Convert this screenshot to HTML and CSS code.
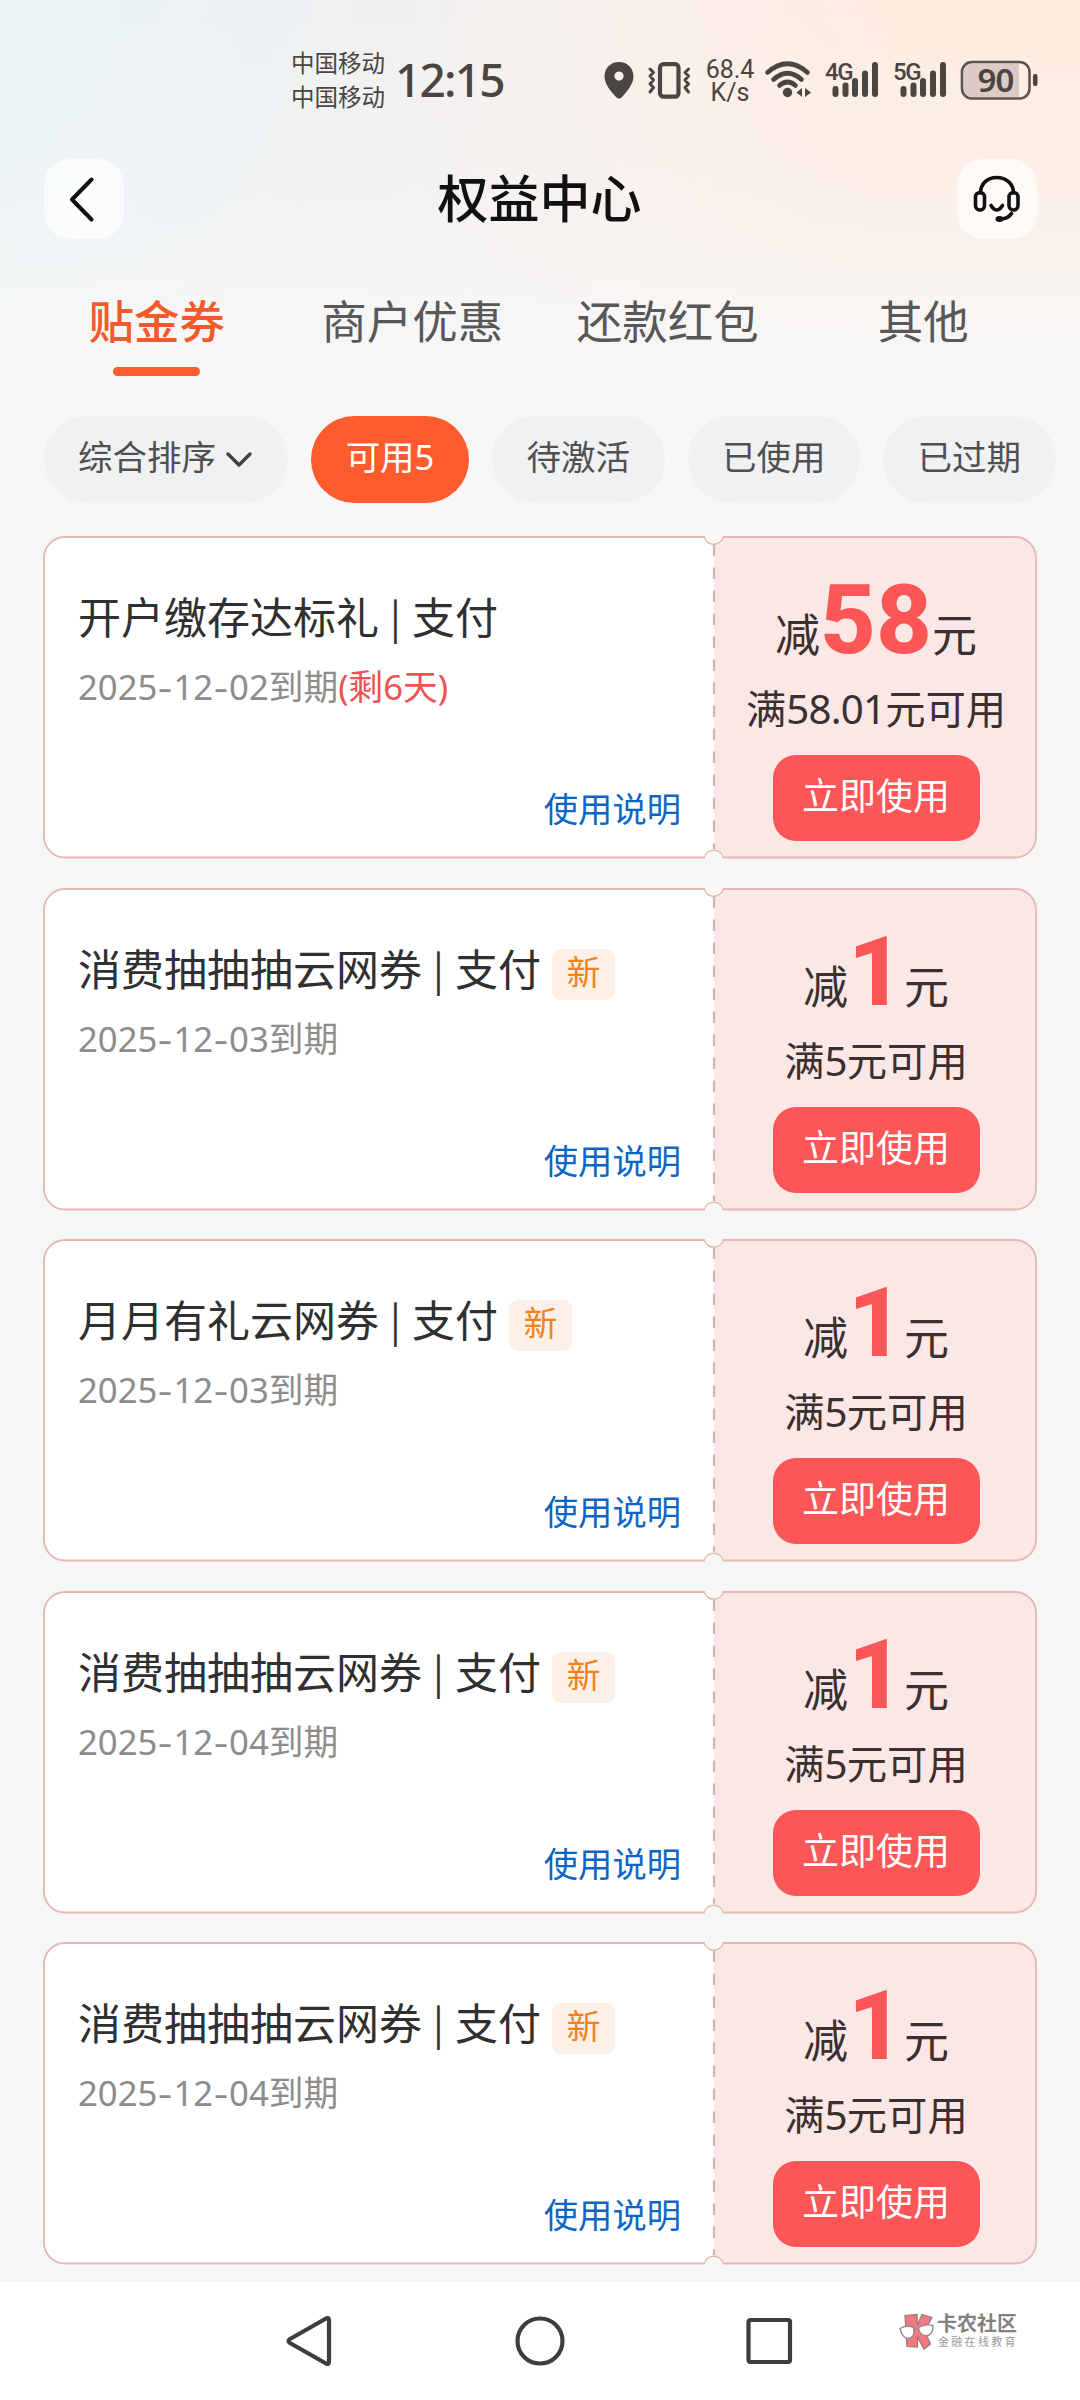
FILE: index.html
```html
<!DOCTYPE html>
<html lang="zh-CN">
<head>
<meta charset="utf-8">
<title>权益中心</title>
<link rel="stylesheet" href="styles.css">
</head>
<body>
<svg class="defs" width="0" height="0" aria-hidden="true">
  <symbol id="ticket" viewBox="0 0 994 323">
    <path class="ticket-left" d="M671 10V313.500a9.500 9.500 0 0 0-9 8H22A21 21 0 0 1 1 300.500V22A21 21 0 0 1 22 1H662a9.500 9.500 0 0 0 9 9Z"/>
    <path class="ticket-right" d="M671 10a9.500 9.500 0 0 0 9-9H972A21 21 0 0 1 993 22V300.500a21 21 0 0 1-21 21H680a9.500 9.500 0 0 0-9-8Z"/>
    <path class="ticket-line" d="M22 1H661.500a9.500 9.200 0 0 0 18.500 0H972A21 21 0 0 1 993 22V300.500a21 21 0 0 1-21 21H680a9.500 9.200 0 0 0-18.500 0H22A21 21 0 0 1 1 300.500V22A21 21 0 0 1 22 1Z"/>
    <path class="ticket-notch" d="M662 0V1a9 8.500 0 0 0 17.500 0V0ZM662 323V321.500a9 8.500 0 0 1 17.500 0V323Z"/>
    <path class="ticket-dash" d="M671 8.500V313"/>
  </symbol>
</svg>

<header class="header">
  <div class="status">
    <div class="carriers"><span>中国移动</span><span>中国移动</span></div>
    <div class="time">12:15</div>
    <div class="status-icons">
      <svg class="pin" width="30" height="37" viewBox="0 0 30 37"><path fill-rule="evenodd" d="M15 0C6.500 0 .5 6.300.5 14.500c0 7 5.500 14 11.500 20.500q3 3 6 0C24 28.500 29.500 21.500 29.500 14.500 29.500 6.300 23.500 0 15 0Zm0 9.500a4.500 4.500 0 1 1 0 9.200 4.500 4.500 0 0 1 0-9.200Z"/></svg>
      <svg class="vibrate" width="46" height="37" viewBox="0 0 46 37"><rect x="13" y="2.200" width="18.500" height="32.500" rx="3.500"/><path d="M3 7l3.500 3.500L3 14l3.500 4L3 22l3.500 3.500L3 30M41.500 7L38 10.500l3.500 3.500-3.500 4 3.500 4-3.500 3.500 3.500 4.500"/></svg>
      <div class="speed"><span>68.4</span><span>K/s</span></div>
      <svg class="wifi" width="48" height="38" viewBox="0 0 48 38"><g class="arcs"><path d="M3.500 11.500Q23.500-6 43.500 11.500M9.500 18.500Q23.500 6 37.500 18.500M15.500 24.500Q23.500 17.500 31.500 24.500"/></g><circle cx="23.500" cy="31.500" r="4.700"/><path d="M38 27v9l-5.500-4.500ZM41 27l6 4.500-6 4.500Z"/></svg>
      <svg class="signal" width="54" height="38" viewBox="0 0 54 38"><text x="0" y="18.500">4G</text><path d="M10.500 28V33M20.500 24.500V33M30 20V33M40 12.500V33M50 4V33"/></svg>
      <svg class="signal second" width="54" height="38" viewBox="0 0 54 38"><text x="0" y="18.500">5G</text><path d="M10.500 28V33M20.500 24.500V33M30 20V33M40 12.500V33M50 4V33"/></svg>
      <svg class="battery" width="78" height="40" viewBox="0 0 78 40"><path class="level" d="M12 3.500H59V37H12A8 8 0 0 1 4 29V11.500A8 8 0 0 1 12 3.500Z"/><rect class="case" x="2" y="2" width="67.500" height="36.500" rx="10"/><rect class="tip" x="73" y="14" width="4.500" height="12" rx="2"/><text x="35.500" y="32" text-anchor="middle">90</text></svg>
    </div>
  </div>

  <div class="titlebar">
    <button class="square-btn" aria-label="返回"><svg width="80" height="80" viewBox="0 0 80 80"><path d="M47.500 20.500L28 40.500 47.500 60.500"/></svg></button>
    <h1>权益中心</h1>
    <button class="square-btn" aria-label="客服"><svg width="80" height="80" viewBox="0 0 80 80"><g class="headset"><path d="M23.500 34C23.500 25 30 18.500 39.700 18.500S56.500 25 56.500 34"/><rect x="18.500" y="33.500" width="9" height="17.500" rx="4.500"/><rect x="52" y="33.500" width="9" height="17.500" rx="4.500"/><path d="M34 46.500q5.700 9 11.500 0M54.500 54.500Q51.500 59.500 44 60"/></g><ellipse cx="42.500" cy="60" rx="4" ry="3"/></svg></button>
  </div>

  <nav class="tabs">
    <a class="tab active">贴金券</a>
    <a class="tab">商户优惠</a>
    <a class="tab">还款红包</a>
    <a class="tab">其他</a>
  </nav>

  <div class="filters">
    <span class="chip sort">综合排序<svg width="26" height="16" viewBox="0 0 26 16"><path d="M2 2L13 13 24 2"/></svg></span>
    <span class="chip on">可用5</span>
    <span class="chip">待激活</span>
    <span class="chip">已使用</span>
    <span class="chip">已过期</span>
  </div>
</header>

<main class="list">
  <article class="card">
    <svg class="shape"><use href="#ticket"/></svg>
    <div class="info">
      <h2>开户缴存达标礼<i>|</i>支付</h2>
      <p class="date">2025<b>-</b>12<b>-</b>02到期<em>(剩6天)</em></p>
      <a class="help">使用说明</a>
    </div>
    <div class="offer">
      <div class="amount">减<strong>58</strong>元</div>
      <div class="cond">满<span>58.01</span>元可用</div>
      <button class="use">立即使用</button>
    </div>
  </article>
  <article class="card">
    <svg class="shape"><use href="#ticket"/></svg>
    <div class="info">
      <h2>消费抽抽抽云网券<i>|</i>支付<span class="new">新</span></h2>
      <p class="date">2025<b>-</b>12<b>-</b>03到期</p>
      <a class="help">使用说明</a>
    </div>
    <div class="offer">
      <div class="amount">减<strong>1</strong>元</div>
      <div class="cond">满<span>5</span>元可用</div>
      <button class="use">立即使用</button>
    </div>
  </article>
  <article class="card">
    <svg class="shape"><use href="#ticket"/></svg>
    <div class="info">
      <h2>月月有礼云网券<i>|</i>支付<span class="new">新</span></h2>
      <p class="date">2025<b>-</b>12<b>-</b>03到期</p>
      <a class="help">使用说明</a>
    </div>
    <div class="offer">
      <div class="amount">减<strong>1</strong>元</div>
      <div class="cond">满<span>5</span>元可用</div>
      <button class="use">立即使用</button>
    </div>
  </article>
  <article class="card">
    <svg class="shape"><use href="#ticket"/></svg>
    <div class="info">
      <h2>消费抽抽抽云网券<i>|</i>支付<span class="new">新</span></h2>
      <p class="date">2025<b>-</b>12<b>-</b>04到期</p>
      <a class="help">使用说明</a>
    </div>
    <div class="offer">
      <div class="amount">减<strong>1</strong>元</div>
      <div class="cond">满<span>5</span>元可用</div>
      <button class="use">立即使用</button>
    </div>
  </article>
  <article class="card">
    <svg class="shape"><use href="#ticket"/></svg>
    <div class="info">
      <h2>消费抽抽抽云网券<i>|</i>支付<span class="new">新</span></h2>
      <p class="date">2025<b>-</b>12<b>-</b>04到期</p>
      <a class="help">使用说明</a>
    </div>
    <div class="offer">
      <div class="amount">减<strong>1</strong>元</div>
      <div class="cond">满<span>5</span>元可用</div>
      <button class="use">立即使用</button>
    </div>
  </article>
</main>

<footer class="navbar">
  <svg class="key back" width="50" height="54" viewBox="0 0 50 54"><path d="M42 4.500L6 25Q3 27 6 29L42 49.500Q45 51 45 48V6Q45 3 42 4.500Z"/></svg>
  <svg class="key home" width="50" height="54" viewBox="0 0 50 54"><circle cx="25" cy="27" r="22.500"/></svg>
  <svg class="key recent" width="50" height="54" viewBox="0 0 50 54"><rect x="4.500" y="6" width="41.500" height="42" rx="2"/></svg>
  <div class="brand">
    <svg width="36" height="38" viewBox="0 0 36 38"><path class="k" d="M6 2.500L18 1.500 18.500 12 23 1.500 33 4.500 25.500 18 31.500 31 25 36 18.500 24V34L8 33.500Z"/><path class="g" d="M1 15.500Q8 11.500 14.500 14.500 16.500 24.500 9 25.500 3 25 1 15.500ZM19.500 14.500Q26 10.500 34 12.500 34.500 22 27 22.800 20.500 22.500 19.500 14.500ZM14.500 16L19.500 15.500"/></svg>
    <div class="brand-text"><strong>卡农社区</strong><small>金融在线教育</small></div>
  </div>
</footer>
</body>
</html>
```
FILE: styles.css
```css
* { box-sizing: border-box; margin: 0; padding: 0; }
body {
  width: 1080px;
  height: 2400px;
  display: flex;
  flex-direction: column;
  overflow: hidden;
  background: #f6f6f6;
  font-family: "Noto Sans", "Noto Sans CJK SC", sans-serif;
  color: #303030;
}
button { border: 0; font-family: inherit; }
svg { overflow: visible; }
.defs { position: absolute; }

/* header */
.header {
  height: 527px;
  flex: none;
  border-bottom: 2px solid #fafafa;
  background:
    linear-gradient(180deg, rgba(247,247,247,0) 0, rgba(247,247,247,.2) 130px, rgba(247,247,247,.45) 230px, rgba(247,247,247,.85) 320px, #f7f7f7 400px),
    linear-gradient(100deg, #e9f4f7 0, #edf1f4 22%, #f4f0ee 43%, #fbeee7 62%, #feecdf 78%, #feecdf 100%);
}
.status {
  height: 159px;
  display: flex;
  align-items: flex-start;
  padding-left: 291px;
  color: #4a4541;
}
.carriers { display: flex; flex-direction: column; padding-top: 46px; width: 104px; }
.carriers span { font-size: 23.500px; line-height: 34px; white-space: nowrap; }
.time { width: 208px; padding-top: 49px; font-size: 46px; line-height: 60px; font-weight: 500; letter-spacing: -1.800px; white-space: nowrap; }
.status-icons { display: flex; align-items: flex-start; padding-top: 61px; fill: #4a4541; }
.pin { margin-left: 1px; margin-top: 1px; }
.vibrate { margin-left: 13px; margin-top: 1px; fill: none; stroke: #4a4541; stroke-width: 4.200; stroke-linejoin: round; }
.vibrate path { stroke-width: 3; stroke-linecap: round; }
.speed { display: flex; flex-direction: column; align-items: center; width: 52px; margin: -3px 0 0 11px; font-family: Roboto, sans-serif; font-size: 25px; line-height: 23px; }
.wifi { margin-left: 8px; }
.wifi .arcs { fill: none; stroke: #4a4541; stroke-width: 4.600; stroke-linecap: round; }
.signal { margin-left: 13px; }
.signal.second { margin-left: 14px; }
.signal path { stroke: #4a4541; stroke-width: 6; stroke-linecap: round; }
.signal text { font: 500 24px Roboto, sans-serif; letter-spacing: -1.500px; }
.battery { margin-left: 13px; margin-top: -1px; }
.battery .level { fill: #dccbc4; }
.battery .case { fill: none; stroke: #5a534e; stroke-width: 2.600; }
.battery text { font: 600 33px "Noto Sans", sans-serif; letter-spacing: -1px; }

.titlebar { display: flex; justify-content: space-between; align-items: center; height: 80px; padding: 0 43px 0 44px; }
.square-btn { width: 80px; height: 80px; border-radius: 26px; background: rgba(255,255,255,.64); }
.square-btn svg { display: block; fill: #111; }
.square-btn path, .square-btn rect { fill: none; stroke: #111; stroke-width: 4; stroke-linecap: round; stroke-linejoin: round; }
.square-btn .headset path, .square-btn .headset rect { stroke-width: 3.600; }
h1 { padding: 0 2px 3px 0; font-size: 51px; line-height: 72px; font-weight: 500; color: #111; }

.tabs { display: flex; padding: 0 29px; height: 177px; }
.tab {
  flex: 1;
  display: flex;
  flex-direction: column;
  align-items: center;
  padding-top: 50px;
  font-size: 45.500px;
  line-height: 64px;
  color: #585858;
}
.tab.active { color: #f15b2c; font-weight: 500; }
.tab.active::after { content: ""; width: 87px; height: 9px; margin-top: 14px; border-radius: 5px; background: #fb5c2e; }

.filters { display: flex; gap: 23px; padding-left: 44px; }
.chip {
  width: 172.500px;
  height: 87px;
  flex: none;
  display: flex;
  justify-content: center;
  border-radius: 44px;
  background: #eff1f3;
  font-size: 34.500px;
  line-height: 82px;
  color: #505050;
}
.chip.sort { width: 244px; padding-right: 2px; }
.chip.sort svg { margin: 36px 0 0 10px; fill: none; stroke: #404040; stroke-width: 3.400; stroke-linecap: round; stroke-linejoin: round; }
.chip.on { width: 158px; background: #ff5c2e; color: #fff; }

/* coupons */
.list { flex: 1; display: flex; flex-direction: column; gap: 28.450px; padding: 9.200px 0 0 43px; }
.card { position: relative; width: 995px; height: 323px; flex: none; display: flex; }
.shape { position: absolute; inset: 0; width: 994px; height: 323px; }
.ticket-left { fill: #fff; }
.ticket-right { fill: #fbe7e5; }
.ticket-line { fill: none; stroke: #e6b7b2; stroke-width: 1.800; }
.ticket-notch { fill: #f9f8f8; }
.ticket-dash { fill: none; stroke: #dcaeae; stroke-width: 2.200; stroke-dasharray: 11.500 11.500; }
.info { position: relative; width: 671px; padding: 53px 33px 0 35px; display: flex; flex-direction: column; }
h2 { display: flex; height: 58px; font-size: 43px; line-height: 57px; font-weight: 400; color: #303030; white-space: nowrap; }
h2 i { width: 33px; text-align: center; font-style: normal; font-family: "Noto Sans CJK SC", sans-serif; font-size: 40px; line-height: 54px; }
.new { width: 63px; height: 51px; margin: 8px 0 0 11px; border-radius: 9px; background: #fdf0e7; color: #f0831e; font-size: 34px; line-height: 46px; text-align: center; }
.date { margin-top: 16px; font-size: 34.700px; line-height: 48px; color: #8c8c8c; white-space: nowrap; }
.date b { display: inline-block; width: 16px; text-align: center; font-weight: 400; transform: scaleX(1.3); }
.date em { font-style: normal; color: #ef5252; }
.help { margin-top: 74px; align-self: flex-end; font-size: 34.300px; line-height: 48px; color: #0b66c6; }
.offer { position: relative; width: 324px; display: flex; flex-direction: column; align-items: center; }
.amount { height: 140px; padding-top: 28px; display: flex; align-items: baseline; font-size: 45px; line-height: 110px; color: #3a302f; }
.amount strong { position: relative; top: 1px; font-family: Roboto, sans-serif; font-size: 97px; font-weight: 800; color: #fd5656; }
.cond { height: 56px; margin-top: 5px; font-size: 40.300px; line-height: 56px; color: #3a302f; white-space: nowrap; }
.cond span { letter-spacing: -.8px; }
.use { width: 207px; height: 86px; margin-top: 18px; border-radius: 23px; background: #fd5656; color: #fff; font-size: 37px; line-height: 82px; padding-bottom: 4px; }

/* system navigation */
.navbar { position: relative; height: 118px; flex: none; display: flex; align-items: flex-start; padding: 32px 0 0 284px; background: #fff; }
.key { fill: none; stroke: #3d3d3d; stroke-width: 4.200; stroke-linejoin: round; }
.key.home { margin-left: 181px; }
.key.recent { margin-left: 179px; }
.brand { display: flex; margin-left: 105px; margin-top: -1px; }
.brand .k { fill: #f4787f; stroke: #8d7b7b; stroke-width: 1.200; }
.brand .g { fill: #fff; stroke: #9a8d8d; stroke-width: 1.400; }
.brand-text { display: flex; flex-direction: column; padding-left: 2px; white-space: nowrap; }
.brand strong { font-size: 20px; line-height: 22px; font-weight: 700; color: #858080; }
.brand small { font-size: 11px; line-height: 14px; letter-spacing: 2.300px; color: #999; padding-left: 1px; }
```
